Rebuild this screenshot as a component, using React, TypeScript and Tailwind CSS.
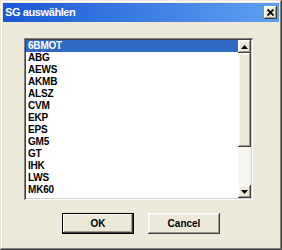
import React from "react";

const items = ["6BMOT", "ABG", "AEWS", "AKMB", "ALSZ", "CVM", "EKP", "EPS", "GM5", "GT", "IHK", "LWS", "MK60"];

const raised =
  "bg-[#ece9d8] shadow-[inset_-1px_-1px_0_#404040,inset_1px_1px_0_#ffffff,inset_-2px_-2px_0_#9d9a8c,inset_2px_2px_0_#f4f3ee]";

function Arrow({ up }: { up: boolean }) {
  return (
    <svg width="7" height="4" viewBox="0 0 7 4">
      {up ? <polygon points="3.5,0 7,4 0,4" fill="#000" /> : <polygon points="0,0 7,0 3.5,4" fill="#000" />}
    </svg>
  );
}

export default function App() {
  return (
    <div
      className="w-[282px] h-[250px] bg-[#ece9d8] flex flex-col p-[3px] shadow-[inset_-1px_-1px_0_#404040,inset_1px_1px_0_#ece9d8,inset_-2px_-2px_0_#808080,inset_2px_2px_0_#ffffff]"
      style={{ fontFamily: '"Liberation Sans", Arial, sans-serif' }}
    >
      <div className="h-[19px] flex items-center justify-between bg-gradient-to-r from-[#1b57d4] to-[#5fa0f2] pl-[2px] pr-[2px]">
        <span className="text-white font-bold text-[11px] tracking-[-0.4px] leading-none">SG auswählen</span>
        <div className={`w-[13px] h-[13px] flex items-center justify-center ${raised}`}>
          <svg width="7" height="7" viewBox="0 0 7 7">
            <path d="M0.5 0.5 L6.5 6.5 M6.5 0.5 L0.5 6.5" stroke="#000" strokeWidth="1.8" />
          </svg>
        </div>
      </div>

      <div className="ml-[21px] mt-[16px] w-[229px] h-[162px] p-[2px] bg-white shadow-[inset_1px_1px_0_#808080,inset_-1px_-1px_0_#ffffff,inset_2px_2px_0_#404040,inset_-2px_-2px_0_#d4d0c8] flex">
        <div className="flex-1 flex flex-col">
          {items.map((it, i) => (
            <div
              key={it}
              className={`h-[12px] leading-[12px] pl-[2px] text-[10px] font-bold tracking-[-0.2px] ${
                i === 0 ? "bg-[#316ac5] text-white" : "text-black"
              }`}
            >
              {it}
            </div>
          ))}
        </div>
        <div className="w-[13px] flex flex-col">
          <div className={`h-[13px] flex items-center justify-center ${raised}`}>
            <Arrow up />
          </div>
          <div className={`h-[94px] ${raised}`} />
          <div className="flex-1 bg-[#f5f4ef]" />
          <div className={`h-[13px] flex items-center justify-center ${raised}`}>
            <Arrow up={false} />
          </div>
        </div>
      </div>

      <div className="flex mt-[13px] ml-[59px] gap-[14px]">
        <div className="w-[72px] h-[21px] border border-black flex items-center justify-center bg-[#ece9d8] shadow-[inset_-1px_-1px_0_#404040,inset_1px_1px_0_#ffffff,inset_-2px_-2px_0_#9d9a8c]">
          <span className="text-[10px] font-bold text-black">OK</span>
        </div>
        <div className={`w-[72px] h-[21px] flex items-center justify-center ${raised}`}>
          <span className="text-[10px] font-bold text-black">Cancel</span>
        </div>
      </div>
    </div>
  );
}
